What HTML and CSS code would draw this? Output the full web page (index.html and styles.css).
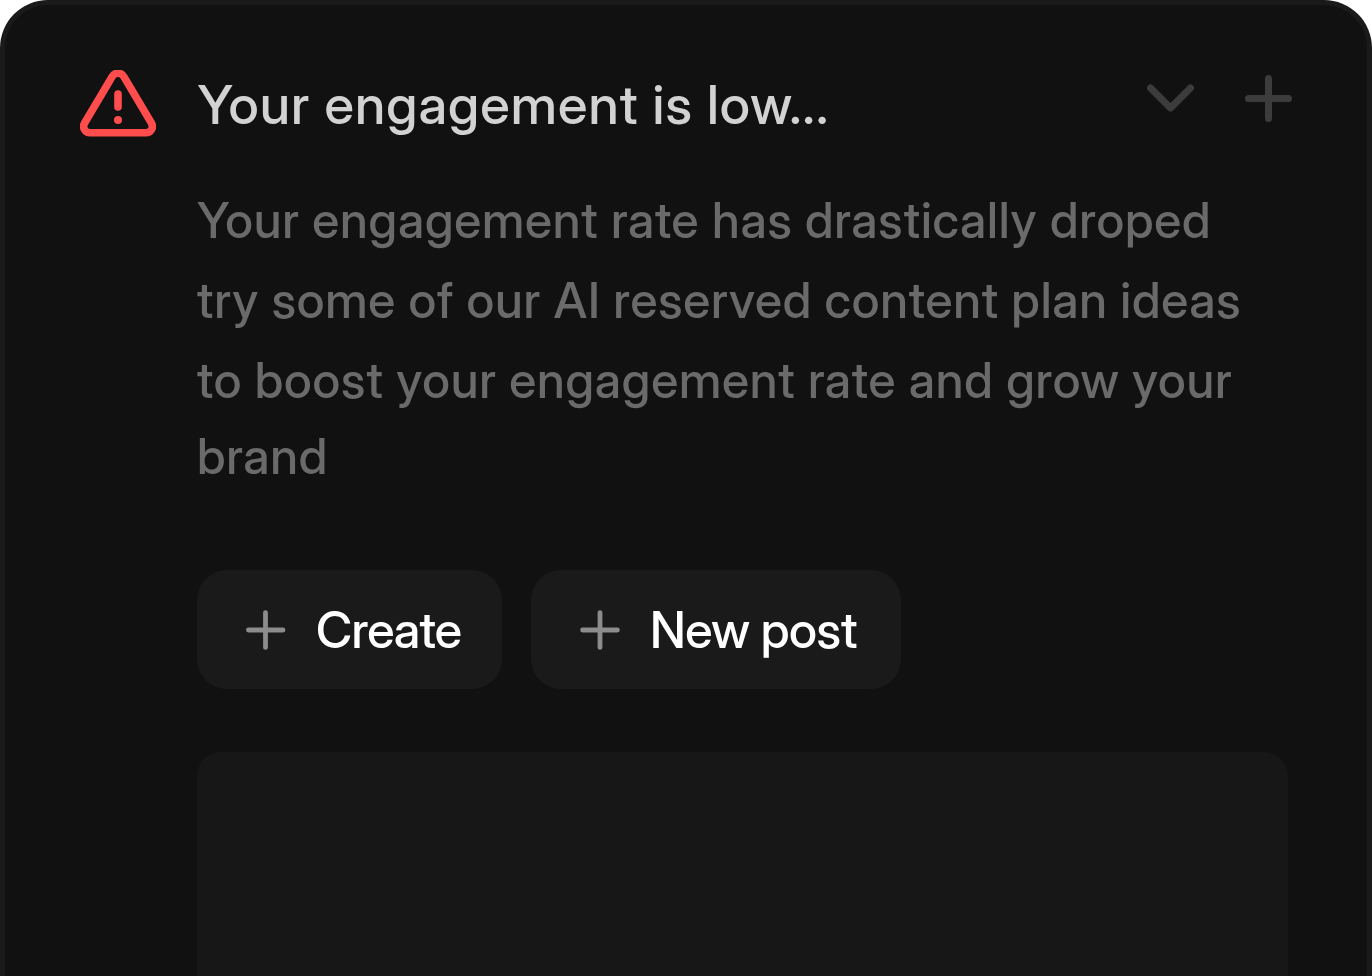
FILE: index.html
```html
<!DOCTYPE html>
<html lang="en">
<head>
    <meta charset="UTF-8">
    <meta name="viewport" content="width=device-width, initial-scale=1.0">
    <title>Engagement alert</title>
    <link rel="stylesheet" href="styles.css">
</head>
<body>

<div class="alert-card">
    <div class="alert-header">
        <svg class="warning-icon" viewBox="0 0.4 76 68" fill="none" stroke="#ff4d4d" stroke-width="7.6" stroke-linecap="round" stroke-linejoin="round">
            <path d="M32.3 6.8 L4.9 52.9 C1.9 57.9 4.8 63.2 10.4 63.2 H65.6 C71.2 63.2 74.1 57.9 71.1 52.9 L43.7 6.8 C41.1 2.5 34.9 2.5 32.3 6.8 Z"/>
            <path d="M38 24.4 V37.4"/>
            <circle cx="38" cy="50.4" r="4" fill="#ff4d4d" stroke="none"/>
        </svg>
        <h1>Your engagement is low...</h1>
        <div class="header-actions">
            <svg class="chevron-icon" viewBox="0 0 48 48" fill="none" stroke="#3c3c3c" stroke-width="7" stroke-linecap="round" stroke-linejoin="round">
                <path d="M3.5 13 L23.5 33 L43.5 13"/>
            </svg>
            <svg class="plus-icon" viewBox="0 0 48 48" fill="none" stroke="#3c3c3c" stroke-width="7" stroke-linecap="round">
                <path d="M23.5 3.5 V43.5 M3.5 23.5 H43.5"/>
            </svg>
        </div>
    </div>

    <div class="alert-body">
        <p>
            <span class="line">Your engagement rate has drastically droped</span>
            <span class="line">try some of our AI reserved content plan ideas</span>
            <span class="line">to boost your engagement rate and grow your</span>
            <span class="line line-last">brand</span>
        </p>

        <div class="buttons">
            <button type="button" class="btn create-btn">
                <svg viewBox="0 0 40 40" fill="none" stroke="#8c8c8c" stroke-width="4.8" stroke-linecap="round">
                    <path d="M19.5 2.6 V37.4 M2.4 20 H37"/>
                </svg>
                Create
            </button>
            <button type="button" class="btn post-btn">
                <svg viewBox="0 0 40 40" fill="none" stroke="#8c8c8c" stroke-width="4.8" stroke-linecap="round">
                    <path d="M20 2.6 V37.4 M2.6 20 H37.4"/>
                </svg>
                New post
            </button>
        </div>

        <div class="preview"></div>
    </div>
</div>

</body>
</html>
```
FILE: styles.css
```css
* {
    box-sizing: border-box;
}
body {
    margin: 0;
    background: #ffffff;
    font-family: "Inter Display", Inter, sans-serif;
    font-weight: 500;
    overflow: hidden;
}
.alert-card {
    height: 976px;
    padding: 63px 75px 0;
    background: #111111;
    border: 5px solid #1a1a1a;
    border-bottom: none;
    border-radius: 48px 48px 0 0;
    overflow: hidden;
}
.alert-header {
    display: flex;
    align-items: flex-start;
    height: 112px;
}
.warning-icon {
    width: 76px;
    height: 68px;
    margin-top: 2px;
}
h1 {
    margin: 0 0 0 41.5px;
    font-size: 54px;
    font-weight: 500;
    line-height: 74px;
    letter-spacing: 1.08px;
    color: #d2d2d2;
    white-space: nowrap;
}
.header-actions {
    display: flex;
    gap: 50px;
    margin: 7px -1px 0 auto;
}
.header-actions svg {
    width: 48px;
    height: 48px;
}
.alert-body {
    margin-left: 117px;
}
p {
    margin: 0;
    height: 390px;
    font-size: 49.5px;
    line-height: 80px;
    letter-spacing: 0.79px;
    color: #6a6a6a;
    white-space: nowrap;
}
.line {
    display: block;
}
.line-last {
    line-height: 73px;
}
.buttons {
    display: flex;
    gap: 29px;
}
.btn {
    display: flex;
    align-items: center;
    gap: 30px;
    height: 119px;
    padding: 0 0 0 49px;
    border: none;
    border-radius: 30px;
    background: #1a1a1a;
    color: #ffffff;
    font-family: inherit;
    font-size: 50px;
    font-weight: 500;
    letter-spacing: -0.5px;
    white-space: nowrap;
}
.btn svg {
    width: 40px;
    height: 40px;
    flex: none;
}
.create-btn {
    width: 305px;
    letter-spacing: -0.8px;
}
.post-btn {
    width: 370px;
}
.preview {
    width: 1091px;
    height: 300px;
    margin-top: 63px;
    border-radius: 24px;
    background: #171717;
}
```
